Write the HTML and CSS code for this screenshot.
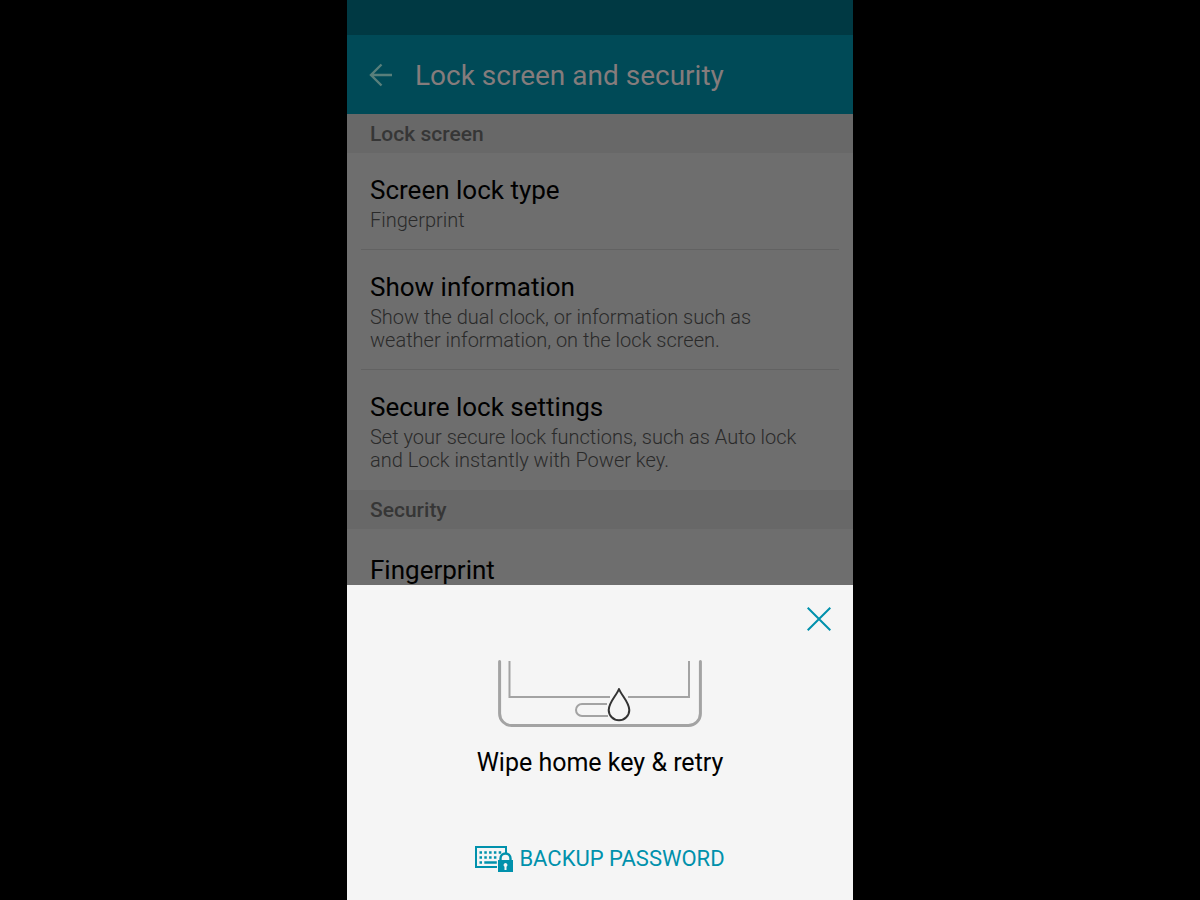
FILE: index.html
```html
<!DOCTYPE html>
<html lang="en">
<head>
    <meta charset="UTF-8">
    <meta name="viewport" content="width=device-width, initial-scale=1.0">
    <title>Lock screen and security</title>
    <link rel="stylesheet" href="styles.css">
</head>
<body>
    <div class="phone">
        <div class="settings">
            <div class="status-bar"></div>
            <header class="app-bar">
                <button class="back" type="button" aria-label="Back">
                    <svg width="24" height="24" viewBox="0 0 24 24" fill="none" stroke="currentColor" stroke-width="2.4">
                        <path d="M12.5 1.5L2 12l10.5 10.5M2 12h21"/>
                    </svg>
                </button>
                <h1>Lock screen and security</h1>
            </header>

            <h2>Lock screen</h2>
            <ul class="list">
                <li>
                    <h3>Screen lock type</h3>
                    <p>Fingerprint</p>
                </li>
                <li>
                    <h3>Show information</h3>
                    <p>Show the dual clock, or information such as weather information, on the lock screen.</p>
                </li>
                <li>
                    <h3>Secure lock settings</h3>
                    <p>Set your secure lock functions, such as Auto lock and Lock instantly with Power key.</p>
                </li>
            </ul>

            <h2>Security</h2>
            <ul class="list security">
                <li>
                    <h3>Fingerprint</h3>
                </li>
            </ul>
        </div>

        <section class="sheet">
            <button class="close" type="button" aria-label="Close">
                <svg width="24" height="24" viewBox="0 0 24 24" fill="none" stroke="currentColor" stroke-width="2">
                    <path d="M.7.7l22.6 22.6M23.3.7L.7 23.3"/>
                </svg>
            </button>

            <!-- bottom of the phone with a water drop on the home key -->
            <svg class="drawing" width="204" height="68" viewBox="0 0 204 68" fill="none" stroke="#a3a3a3" stroke-linecap="round">
                <path stroke-width="3" d="M1.6 1.5v52a12 12 0 0 0 12 12h176.8a12 12 0 0 0 12-12v-52"/>
                <path stroke-width="2" stroke-linecap="butt" d="M11.5 1v36H112M130 37H191V1"/>
                <path stroke-width="2" stroke-linecap="butt" d="M109 44H84a6 6 0 0 0 0 12h26"/>
                <path stroke="#333" stroke-width="2" stroke-linejoin="round" d="M121 29c-2.5 6.5-10.3 13.2-10.3 21a10.3 10.3 0 0 0 20.6 0c0-7.8-7.8-14.5-10.3-21z"/>
            </svg>
            <p class="message">Wipe home key &amp; retry</p>

            <button class="backup" type="button">
                <svg width="38" height="27" viewBox="0 0 38 27" aria-hidden="true">
                    <path fill="none" stroke="#0091ac" stroke-width="2" d="M31 7V1H1v20h21"/>
                    <path fill="none" stroke="#0091ac" stroke-width="2.5" stroke-dasharray="2.5 2.3" d="M4.5 6.5h24M4.5 11.5h19"/>
                    <path fill="none" stroke="#0091ac" stroke-width="2.5" d="M4.5 16.5H7M9.3 16.5h12.5"/>
                    <path fill="none" stroke="#0091ac" stroke-width="2.4" d="M25.5 16v-3.5a5 5 0 0 1 10 0V16"/>
                    <path fill="#0091ac" d="M23 14h15v12H23z"/>
                    <path fill="#f5f5f5" d="M30.5 17a2 2 0 0 1 1 3.7V24h-2v-3.3a2 2 0 0 1 1-3.7z"/>
                </svg>
                BACKUP PASSWORD
            </button>
        </section>
    </div>
</body>
</html>
```
FILE: styles.css
```css
* {
    box-sizing: border-box;
}
body {
    margin: 0;
    background-color: #000;
    font-family: Roboto, sans-serif;
}
h1, h2, h3, p, ul {
    margin: 0;
    padding: 0;
    font-weight: normal;
}
button {
    padding: 0;
    border: none;
    background: none;
    font-family: inherit;
    cursor: pointer;
}
svg {
    display: block;
}
.phone {
    display: flex;
    flex-direction: column;
    max-width: 506px;
    height: 100vh;
    margin: 0 auto;
}

/* Dimmed settings page */
.settings {
    flex: 1;
    min-height: 0;
    overflow: hidden;
    background-color: #6e6e6e;
}
.status-bar {
    height: 35px;
    background-color: #003943;
}
.app-bar {
    display: flex;
    align-items: center;
    gap: 22px;
    height: 79px;
    padding: 0 22px;
    background-color: #004a57;
}
.back {
    color: #587f7b;
}
h1 {
    padding-top: 2px;
    font-size: 28px;
    line-height: 36px;
    color: #857c7c;
}
h2 {
    padding: 1px 23px 0;
    font-size: 21px;
    font-weight: 500;
    line-height: 38px;
    background-color: #686868;
    color: #363636;
}
.list {
    padding: 0 14px;
    list-style: none;
}
.list li {
    padding: 21px 9px 17px;
    border-bottom: 1px solid #626262;
}
.list li:last-child {
    border-color: transparent;
}
.list.security {
    padding-top: 4px;
}
h3 {
    margin-bottom: 3px;
    font-size: 26px;
    line-height: 32px;
    color: #000;
}
.list p {
    padding-right: 20px;
    font-size: 20px;
    font-weight: 300;
    line-height: 23px;
    color: #2a2a2a;
}

/* Fingerprint sheet */
.sheet {
    display: flex;
    flex-direction: column;
    align-items: center;
    padding: 22px 22px 25px;
    background-color: #f5f5f5;
}
.close {
    align-self: flex-end;
    color: #0091ac;
}
.drawing {
    margin-top: 29px;
}
.message {
    margin-top: 19px;
    font-size: 25px;
    line-height: 32px;
    color: #000;
}
.backup {
    display: flex;
    align-items: center;
    gap: 6px;
    margin-top: 64px;
    font-size: 22px;
    line-height: 32px;
    color: #0091ac;
}
```
